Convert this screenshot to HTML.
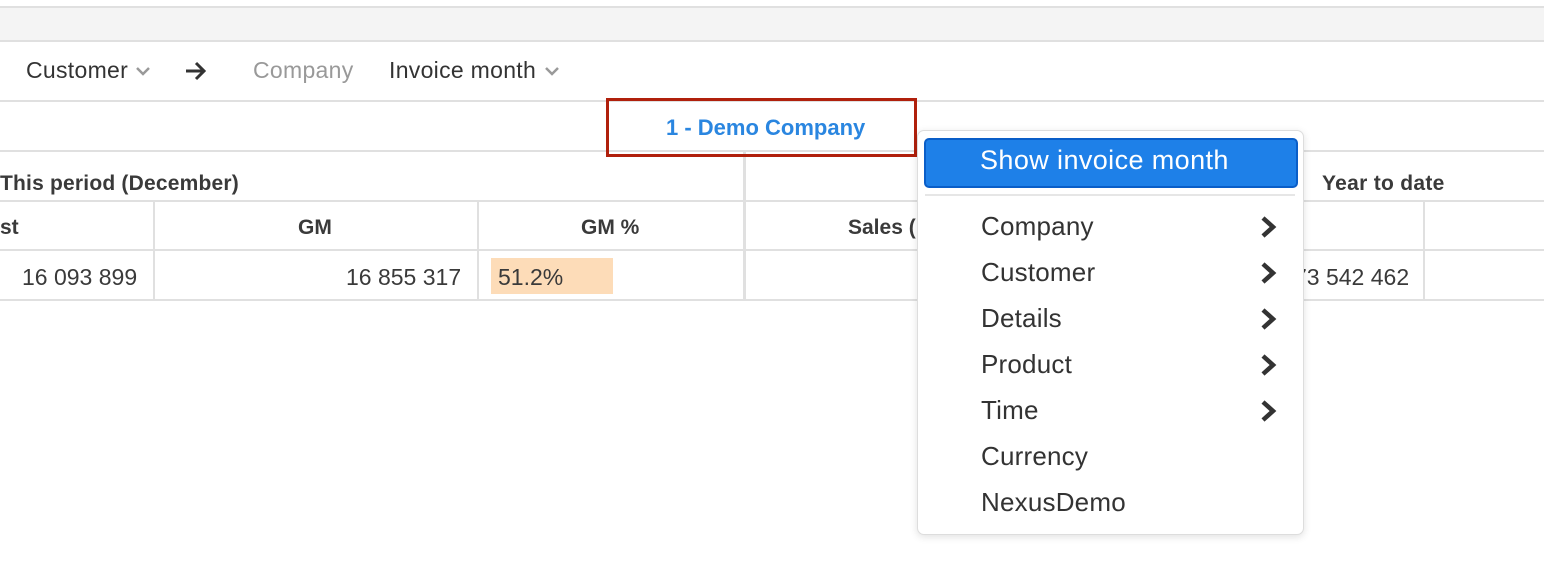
<!DOCTYPE html>
<html><head><style>
body{margin:0;width:1544px;height:570px;background:#fff;font-family:"Liberation Sans",sans-serif;position:relative;overflow:hidden;color:#3a3a3a}
.a{position:absolute}
.h{position:absolute;left:0;width:1544px;height:2px;background:#e0e0e0}
.v{position:absolute;width:2px;background:#e0e0e0}
.t{position:absolute;white-space:nowrap}
.mi{position:absolute;left:981px;font-size:26px;color:#333;white-space:nowrap;letter-spacing:0.2px}
.ch{position:absolute;left:1258px}
.dd{position:absolute}
</style></head><body>
<div class="a" style="left:0;top:7px;width:1544px;height:34px;background:#f4f4f4"></div>
<div class="h" style="top:6px"></div>
<div class="h" style="top:40px"></div>
<div class="h" style="top:100px"></div>
<div class="h" style="top:150px"></div>
<div class="h" style="top:200px"></div>
<div class="h" style="top:249px"></div>
<div class="h" style="top:299px"></div>
<div class="v" style="left:153px;top:201px;height:99px"></div>
<div class="v" style="left:477px;top:201px;height:99px"></div>
<div class="v" style="left:743px;top:151px;height:149px;width:3px"></div>
<div class="v" style="left:1423px;top:201px;height:99px"></div>

<div class="t" style="left:26px;top:57px;font-size:23px;color:#333;letter-spacing:0.3px">Customer</div>
<svg class="dd" style="left:135px;top:65px" width="16" height="12"><path d="M2 3L8 9L14 3" stroke="#999" stroke-width="2.5" fill="none"/></svg>
<svg class="a" style="left:184px;top:60px" width="24" height="22" viewBox="0 0 24 22"><path d="M2 11H20M12 3L20 11L12 19" stroke="#333" stroke-width="3" fill="none"/></svg>
<div class="t" style="left:253px;top:57px;font-size:23px;color:#999;letter-spacing:0.3px">Company</div>
<div class="t" style="left:389px;top:57px;font-size:23px;color:#333;letter-spacing:0.3px">Invoice month</div>
<svg class="dd" style="left:544px;top:65px" width="16" height="12"><path d="M2 3L8 9L14 3" stroke="#999" stroke-width="2.5" fill="none"/></svg>

<div class="a" style="left:606px;top:98px;width:305px;height:53px;border:3px solid #b0200c"></div>
<div class="t" style="left:666px;top:115px;font-size:22px;font-weight:bold;color:#2a86e0">1 - Demo Company</div>

<div class="t" style="left:0;top:172px;font-size:21px;font-weight:bold;letter-spacing:0.2px">This period (December)</div>
<div class="t" style="left:1322px;top:172px;font-size:21px;font-weight:bold;letter-spacing:0.3px">Year to date</div>
<div class="t" style="left:0;top:216px;font-size:21px;font-weight:bold">st</div>
<div class="t" style="left:298px;top:216px;font-size:21px;font-weight:bold">GM</div>
<div class="t" style="left:581px;top:216px;font-size:21px;font-weight:bold">GM %</div>
<div class="t" style="left:848px;top:216px;font-size:21px;font-weight:bold">Sales (</div>
<div class="t" style="left:22px;top:264px;font-size:23px">16 093 899</div>
<div class="t" style="left:346px;top:264px;font-size:23px">16 855 317</div>
<div class="a" style="left:491px;top:258px;width:122px;height:36px;background:#fddcb8"></div>
<div class="t" style="left:498px;top:264px;font-size:23px">51.2%</div>
<div class="t" style="left:1294px;top:264px;font-size:23px">73 542 462</div>

<div class="a" style="left:917px;top:130px;width:385px;height:403px;background:#fff;border:1px solid #ddd;border-radius:7px;box-shadow:0 2px 8px rgba(0,0,0,.12)"></div>
<div class="a" style="left:924px;top:138px;width:370px;height:46px;background:#1e80e8;border:2px solid #0a5ec8;border-radius:5px"></div>
<div class="t" style="left:980px;top:145px;font-size:27px;color:#fff;letter-spacing:0.4px">Show invoice month</div>
<div class="a" style="left:925px;top:194px;width:370px;height:2px;background:#e6e6e6"></div>
<div class="mi" style="top:211px">Company</div>
<div class="mi" style="top:257px">Customer</div>
<div class="mi" style="top:303px">Details</div>
<div class="mi" style="top:349px">Product</div>
<div class="mi" style="top:395px">Time</div>
<div class="mi" style="top:441px">Currency</div>
<div class="mi" style="top:487px">NexusDemo</div>
<svg class="ch" style="top:215px" width="22" height="24"><path d="M5 3L15 12L5 21" stroke="#333" stroke-width="4.5" fill="none"/></svg>
<svg class="ch" style="top:261px" width="22" height="24"><path d="M5 3L15 12L5 21" stroke="#333" stroke-width="4.5" fill="none"/></svg>
<svg class="ch" style="top:307px" width="22" height="24"><path d="M5 3L15 12L5 21" stroke="#333" stroke-width="4.5" fill="none"/></svg>
<svg class="ch" style="top:353px" width="22" height="24"><path d="M5 3L15 12L5 21" stroke="#333" stroke-width="4.5" fill="none"/></svg>
<svg class="ch" style="top:399px" width="22" height="24"><path d="M5 3L15 12L5 21" stroke="#333" stroke-width="4.5" fill="none"/></svg>
</body></html>
